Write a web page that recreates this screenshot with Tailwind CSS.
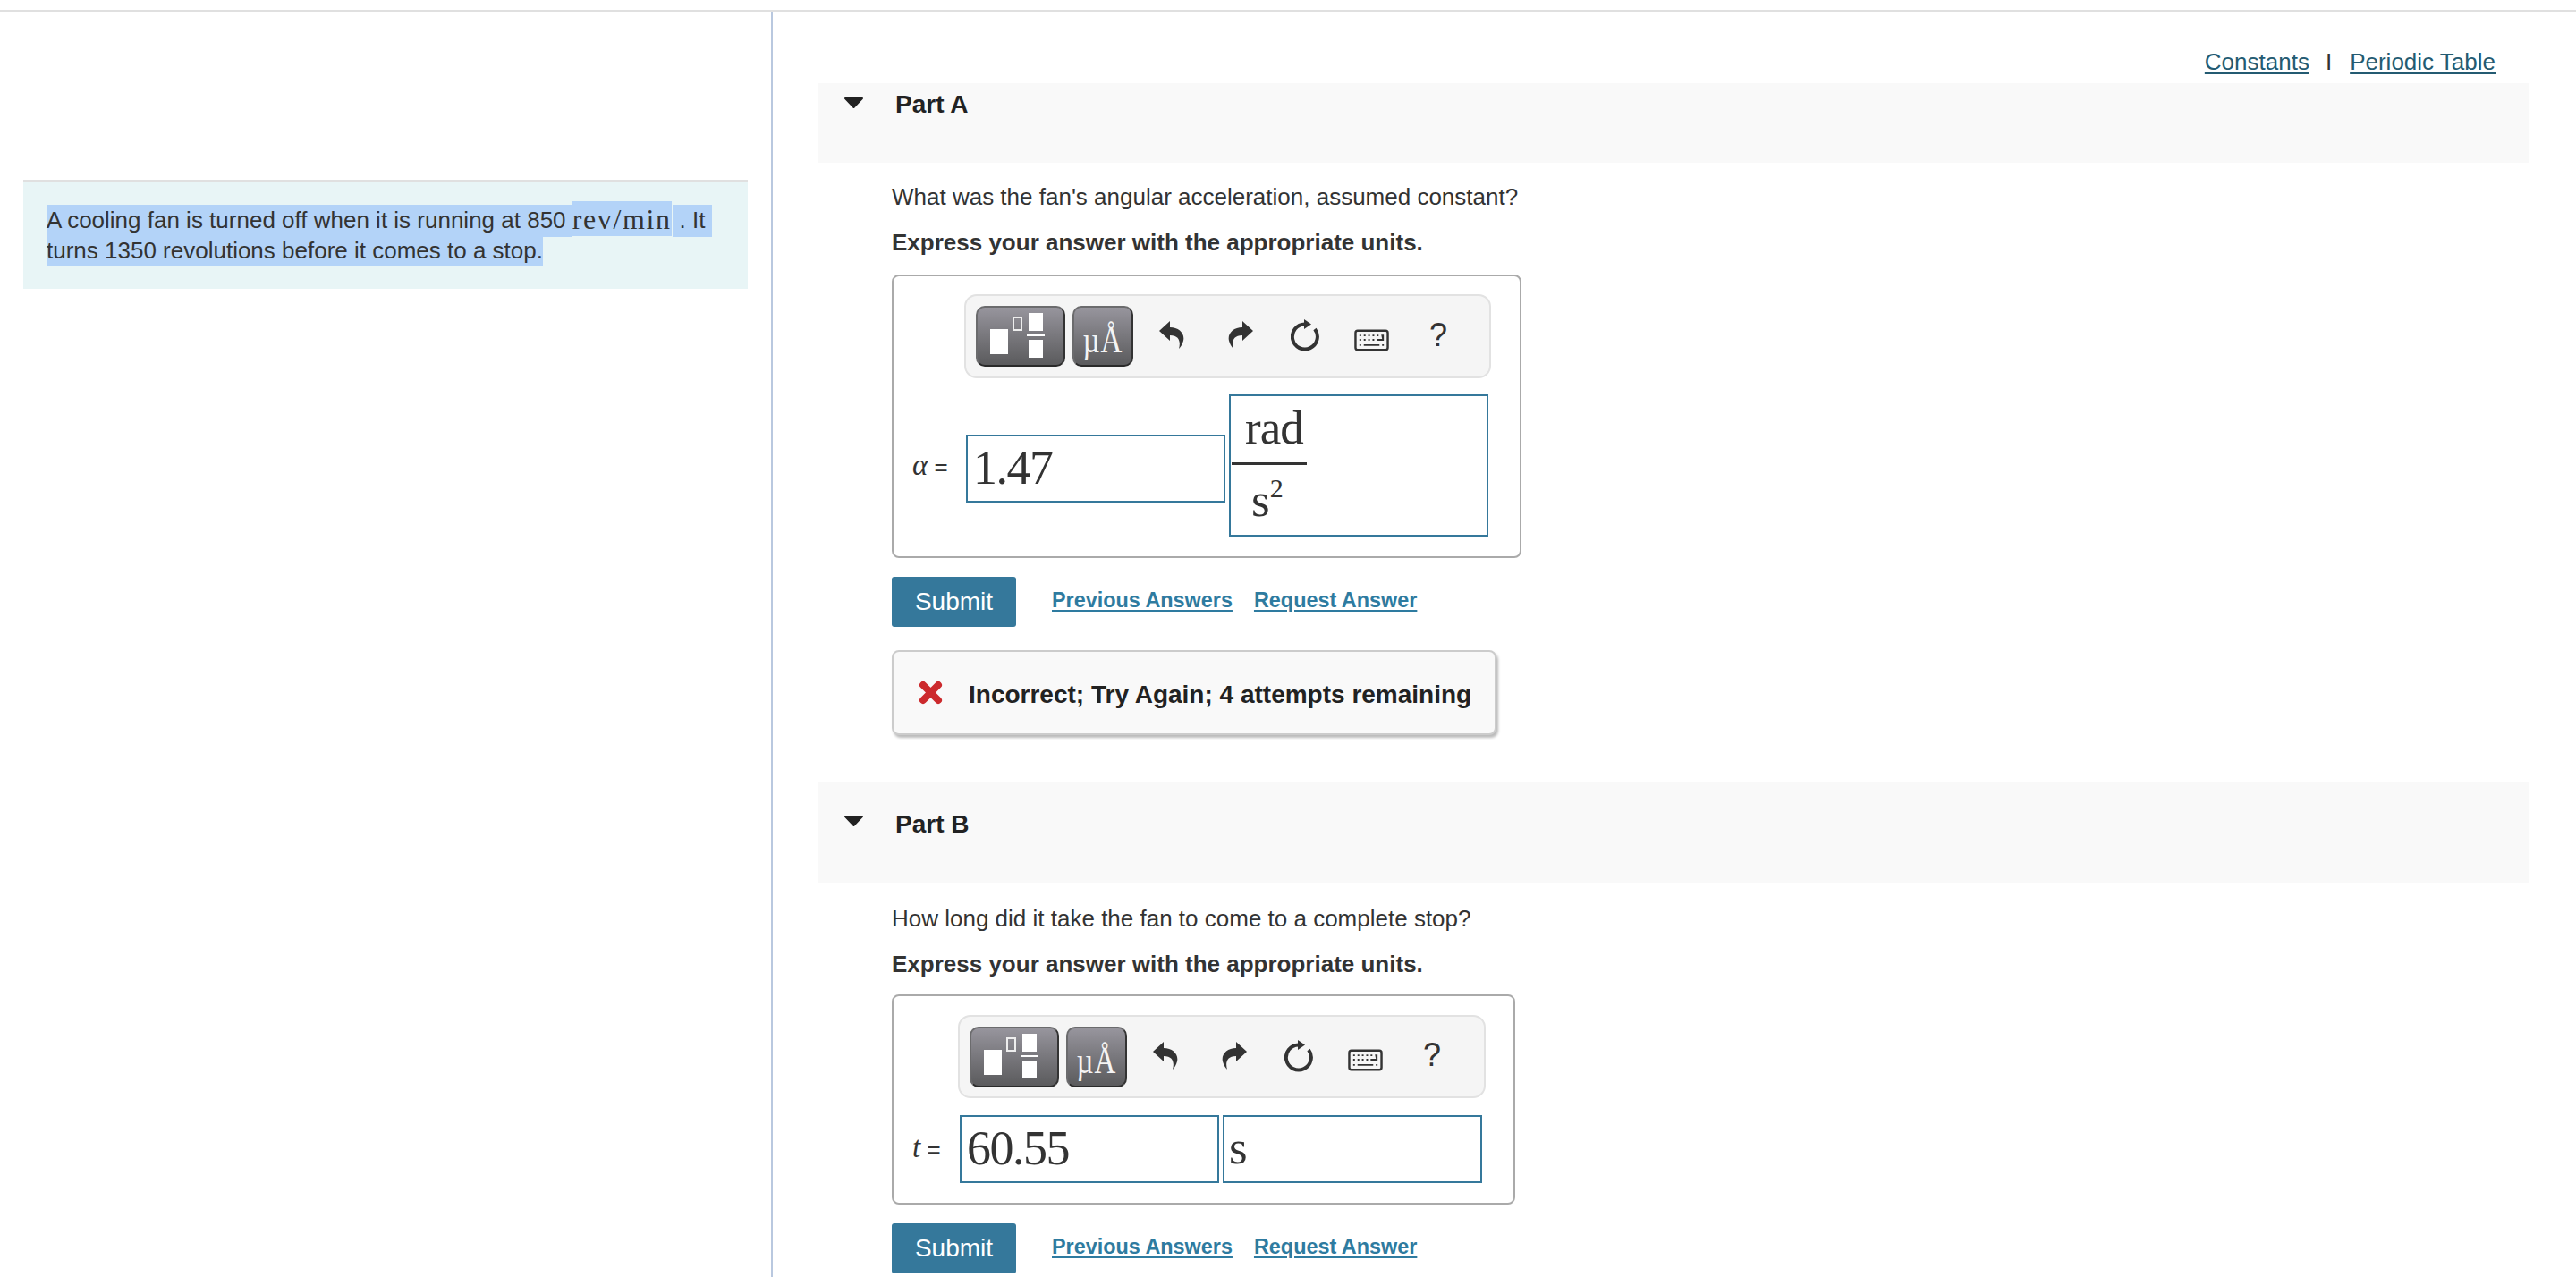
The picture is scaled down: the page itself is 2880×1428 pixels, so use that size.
<!DOCTYPE html>
<html lang="en"><head><meta charset="utf-8"><title>Part</title>
<script src="https://cdn.jsdelivr.net/npm/@tailwindcss/browser@4"></script></head>
<body class="bg-white m-0 overflow-hidden font-['Liberation_Sans',Arial,sans-serif] text-[#333]">
<div class="h-[1428px] w-[2880px] flex flex-col overflow-hidden">
  <div class="h-[11px] shrink-0"></div>
  <div class="h-[2px] shrink-0 bg-[#e0e0e0]"></div>
  <div class="flex flex-1 min-h-0">
    <!-- left column -->
    <aside class="w-[864px] shrink-0 border-r-2 border-[#b9c8df] pl-[26px] pt-[188px]">
      <div class="w-[810px] h-[122px] bg-[#e8f5f6] border-t-2 border-[#e0e0e0] pl-[26px] pt-[26px] text-[26px]">
        <div class="h-[36px] flex items-start whitespace-nowrap"><span class="bg-[#b3d3f8] h-[36px] leading-[34px]">A cooling fan is turned off when it is running at 850&nbsp;</span><span class="bg-[#b3d3f8] h-[39px] leading-[40px] -mt-[4px] font-['Liberation_Serif',serif] text-[32px] tracking-[1.6px]">rev/min</span><span class="bg-[#b3d3f8] h-[36px] leading-[34px] ml-[1px] pl-[8px] pr-[8px]">. It</span></div>
        <div class="flex items-start whitespace-nowrap"><span class="bg-[#b3d3f8] h-[32px] leading-[30px]">turns 1350 revolutions before it comes to a stop.</span></div>
      </div>
    </aside>
    <!-- right column -->
    <main class="flex-1 min-w-0 pl-[51px] pr-[52px]">
      <div class="h-[80px] flex justify-end items-start pt-[41px] pr-[38px] text-[26px] leading-[30px] text-[#245b72]">
        <a class="underline underline-offset-[3px]">Constants</a><span class="ml-[18px] mr-[20px] text-[#333]">I</span><a class="underline underline-offset-[3px]">Periodic Table</a>
      </div>

      <!-- Part A -->
      <section>
        <div class="h-[89px] bg-[#f9f9f9] flex items-start pt-[8px]">
          <svg class="ml-[29px] mt-[8px]" width="21" height="12" viewBox="0 0 21 12"><path d="M1 1H20L10.5 11Z" fill="#222" stroke="#222" stroke-width="2" stroke-linejoin="round"/></svg>
          <h2 class="ml-[36px] text-[28px] leading-[32px] font-bold text-[#222]">Part A</h2>
        </div>
        <p class="ml-[82px] mt-[22px] text-[26px] leading-[32px]">What was the fan's angular acceleration, assumed constant?</p>
        <p class="ml-[82px] mt-[19px] text-[26px] leading-[32px] font-bold">Express your answer with the appropriate units.</p>

        <div class="ml-[82px] mt-[20px] w-[704px] h-[317px] border-2 border-[#aaa] rounded-[8px] pt-[20px] relative">
          <div class="ml-[79px] w-[589px] h-[94px] bg-[#f5f5f5] border-2 border-[#e2e2e2] rounded-[14px] flex items-center pl-[11px]">
            <button class="w-[100px] h-[68px] rounded-[10px] border-2 border-[#6b6b6d] border-b-[#2a2a2a] border-r-[#333] bg-linear-to-b from-[#97959d] to-[#5b5b5d]">
              <svg width="96" height="64" viewBox="0 0 96 64" class="block"><rect x="14" y="24" width="20" height="28" fill="#fff"/><rect x="40" y="11" width="9" height="14" fill="none" stroke="#eee" stroke-width="2"/><rect x="57" y="6" width="16" height="20" fill="#fff"/><rect x="55" y="30" width="20" height="2" fill="#fff"/><rect x="57" y="36" width="16" height="20" fill="#fff"/></svg>
            </button>
            <button class="ml-[8px] w-[68px] h-[68px] rounded-[10px] border-2 border-[#6b6b6d] border-b-[#2a2a2a] border-r-[#333] bg-linear-to-b from-[#97959d] to-[#5b5b5d] text-[#f4f4f4] font-['Liberation_Serif',serif] text-[33px] leading-[64px] overflow-hidden"><span class="inline-block tracking-[1px] scale-y-[1.25] origin-[50%_44px] translate-y-[7px]">µÅ</span></button>
            <svg class="ml-[29px] -mt-[3px]" width="28" height="31" viewBox="0 0 28 31"><path d="M0 11L12 0V7C22 7 29 14 27 22C26 26 24 29 22 31C24 24 23 16 12 16V22Z" fill="#333"/></svg>
            <svg class="ml-[49px] -mt-[3px]" width="28" height="31" viewBox="0 0 28 31"><path d="M28 11L16 0V7C6 7 -1 14 1 22C2 26 4 29 6 31C4 24 5 16 16 16V22Z" fill="#333"/></svg>
            <svg class="ml-[42px] -mt-[2px]" width="33" height="36" viewBox="0 0 33 36"><path d="M15.7 5.5A14 14 0 1 0 27 11" fill="none" stroke="#333" stroke-width="4"/><path d="M15 0L23 5.5L15 11Z" fill="#333"/></svg>
            <svg class="ml-[38px] mt-[8px]" width="39" height="25" viewBox="0 0 40 25"><rect x="1.5" y="1.5" width="37" height="22" rx="2.5" fill="#f5f5f5" stroke="#333" stroke-width="2.5"/><path d="M6 6h2v2H6zM11 6h2v2h-2zM16 6h2v2h-2zM21 6h2v2h-2zM26 6h2v2h-2zM31 6h3v7h-8v-2h6zM6 11h2v2H6zM11 11h2v2h-2zM16 11h2v2h-2zM21 11h2v2h-2zM6 17h2v2H6zM11 17h18v2H11zM32 17h2v2h-2z" fill="#333"/></svg>
            <span class="ml-[45px] text-[36px] leading-[36px] text-[#333] -mt-[3px]">?</span>
          </div>
          <div class="absolute left-[21px] top-[191px] text-[26px] leading-[40px] whitespace-nowrap"><i class="font-['Liberation_Serif',serif] text-[33px]">α</i> =</div>
          <div class="absolute left-[81px] top-[177px] w-[290px] h-[76px] border-2 border-[#35789b] font-['Liberation_Serif',serif] text-[54px] tracking-[-1.5px] leading-[71px] pl-[6px]">1.47</div>
          <div class="absolute left-[375px] top-[132px] w-[290px] h-[159px] border-2 border-[#35789b] font-['Liberation_Serif',serif] text-[53px]">
            <div class="w-[84px] ml-[1px] pl-[15px] tracking-[-1px] leading-[70px] h-[77px] border-b-[3px] border-[#333]">rad</div>
            <div class="ml-[23px] leading-[78px] h-[76px]">s<span class="relative -top-[21px] text-[30px]">2</span></div>
          </div>
        </div>

        <div class="ml-[82px] mt-[21px] flex items-center h-[56px]">
          <button class="w-[139px] h-[56px] bg-[#35789b] rounded-[3px] text-white text-[28px]">Submit</button>
          <a class="ml-[40px] text-[#2e7ba0] font-bold text-[23.4px] underline decoration-2 underline-offset-[3px] -mt-[3px]">Previous Answers</a>
          <a class="ml-[24px] text-[#2e7ba0] font-bold text-[23.4px] underline decoration-2 underline-offset-[3px] -mt-[3px]">Request Answer</a>
        </div>

        <div class="ml-[82px] mt-[26px] w-[676px] h-[95px] bg-[#f9f9f9] border-2 border-[#ccc] rounded-[8px] shadow-[2px_3px_3px_#bbb] flex items-center pl-[28px]">
          <svg width="27" height="27" viewBox="0 0 27 27"><path d="M5 5L22 22M22 5L5 22" fill="none" stroke="#cc2a2d" stroke-width="8" stroke-linecap="round"/></svg>
          <span class="ml-[29px] mt-[5px] font-bold text-[28px] text-[#222] whitespace-nowrap">Incorrect; Try Again; 4 attempts remaining</span>
        </div>
      </section>

      <!-- Part B -->
      <section class="mt-[52px]">
        <div class="h-[113px] bg-[#f9f9f9] flex items-start pt-[32px]">
          <svg class="ml-[29px] mt-[6px]" width="21" height="12" viewBox="0 0 21 12"><path d="M1 1H20L10.5 11Z" fill="#222" stroke="#222" stroke-width="2" stroke-linejoin="round"/></svg>
          <h2 class="ml-[36px] text-[28px] leading-[32px] font-bold text-[#222]">Part B</h2>
        </div>
        <p class="ml-[82px] mt-[24px] text-[26px] leading-[32px]">How long did it take the fan to come to a complete stop?</p>
        <p class="ml-[82px] mt-[19px] text-[26px] leading-[32px] font-bold">Express your answer with the appropriate units.</p>

        <div class="ml-[82px] mt-[18px] w-[697px] h-[235px] border-2 border-[#aaa] rounded-[8px] pt-[21px] relative">
          <div class="ml-[72px] w-[590px] h-[93px] bg-[#f5f5f5] border-2 border-[#e2e2e2] rounded-[14px] flex items-center pl-[11px]">
            <button class="w-[100px] h-[68px] rounded-[10px] border-2 border-[#6b6b6d] border-b-[#2a2a2a] border-r-[#333] bg-linear-to-b from-[#97959d] to-[#5b5b5d]">
              <svg width="96" height="64" viewBox="0 0 96 64" class="block"><rect x="14" y="24" width="20" height="28" fill="#fff"/><rect x="40" y="11" width="9" height="14" fill="none" stroke="#eee" stroke-width="2"/><rect x="57" y="6" width="16" height="20" fill="#fff"/><rect x="55" y="30" width="20" height="2" fill="#fff"/><rect x="57" y="36" width="16" height="20" fill="#fff"/></svg>
            </button>
            <button class="ml-[8px] w-[68px] h-[68px] rounded-[10px] border-2 border-[#6b6b6d] border-b-[#2a2a2a] border-r-[#333] bg-linear-to-b from-[#97959d] to-[#5b5b5d] text-[#f4f4f4] font-['Liberation_Serif',serif] text-[33px] leading-[64px] overflow-hidden"><span class="inline-block tracking-[1px] scale-y-[1.25] origin-[50%_44px] translate-y-[7px]">µÅ</span></button>
            <svg class="ml-[29px] -mt-[3px]" width="28" height="31" viewBox="0 0 28 31"><path d="M0 11L12 0V7C22 7 29 14 27 22C26 26 24 29 22 31C24 24 23 16 12 16V22Z" fill="#333"/></svg>
            <svg class="ml-[49px] -mt-[3px]" width="28" height="31" viewBox="0 0 28 31"><path d="M28 11L16 0V7C6 7 -1 14 1 22C2 26 4 29 6 31C4 24 5 16 16 16V22Z" fill="#333"/></svg>
            <svg class="ml-[42px] -mt-[2px]" width="33" height="36" viewBox="0 0 33 36"><path d="M15.7 5.5A14 14 0 1 0 27 11" fill="none" stroke="#333" stroke-width="4"/><path d="M15 0L23 5.5L15 11Z" fill="#333"/></svg>
            <svg class="ml-[38px] mt-[8px]" width="39" height="25" viewBox="0 0 40 25"><rect x="1.5" y="1.5" width="37" height="22" rx="2.5" fill="#f5f5f5" stroke="#333" stroke-width="2.5"/><path d="M6 6h2v2H6zM11 6h2v2h-2zM16 6h2v2h-2zM21 6h2v2h-2zM26 6h2v2h-2zM31 6h3v7h-8v-2h6zM6 11h2v2H6zM11 11h2v2h-2zM16 11h2v2h-2zM21 11h2v2h-2zM6 17h2v2H6zM11 17h18v2H11zM32 17h2v2h-2z" fill="#333"/></svg>
            <span class="ml-[45px] text-[36px] leading-[36px] text-[#333] -mt-[3px]">?</span>
          </div>
          <div class="absolute left-[21px] top-[149px] text-[26px] leading-[40px] whitespace-nowrap"><i class="font-['Liberation_Serif',serif] text-[33px]">t</i> =</div>
          <div class="absolute left-[74px] top-[133px] w-[290px] h-[76px] border-2 border-[#35789b] font-['Liberation_Serif',serif] text-[54px] tracking-[-1.5px] leading-[70px] pl-[6px]">60.55</div>
          <div class="absolute left-[368px] top-[133px] w-[290px] h-[76px] border-2 border-[#35789b] font-['Liberation_Serif',serif] text-[53px] leading-[69px] pl-[5px]">s</div>
        </div>

        <div class="ml-[82px] mt-[21px] flex items-center h-[56px]">
          <button class="w-[139px] h-[56px] bg-[#35789b] rounded-[3px] text-white text-[28px]">Submit</button>
          <a class="ml-[40px] text-[#2e7ba0] font-bold text-[23.4px] underline decoration-2 underline-offset-[3px] -mt-[3px]">Previous Answers</a>
          <a class="ml-[24px] text-[#2e7ba0] font-bold text-[23.4px] underline decoration-2 underline-offset-[3px] -mt-[3px]">Request Answer</a>
        </div>
      </section>
    </main>
  </div>
</div>
</body></html>
